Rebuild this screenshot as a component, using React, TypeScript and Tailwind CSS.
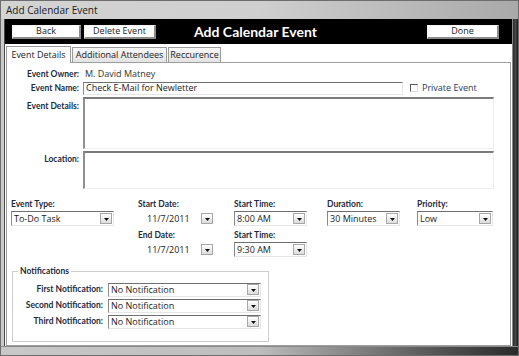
import React from 'react'

// ─── Small pieces ─────────────────────────────────────────────
const sunken =
  'border border-t-[#6f6f6f] border-l-[#8a8a8a] border-b-[#e6e6e6] border-r-[#e6e6e6] bg-white'

const label = "font-['Lato',sans-serif] font-bold text-[8.5px] text-[#1c2b40] whitespace-nowrap"

function Arrow() {
  return (
    <div className="w-[12px] h-[11px] shrink-0 flex items-end justify-center pb-[2px] border border-[#a7a7a7] bg-gradient-to-b from-white to-[#dcdcdc]">
      <svg width="5" height="3" viewBox="0 0 5 3">
        <path d="M0 0h5L2.5 3z" fill="#111" />
      </svg>
    </div>
  )
}

function Select({ value, w, h = 15 }: { value: string; w: string; h?: number }) {
  return (
    <div className={`${w} ${sunken} flex items-center pr-[1px]`} style={{ height: h }}>
      <span className="flex-1 pl-[2px] whitespace-nowrap leading-[12px]">{value}</span>
      <Arrow />
    </div>
  )
}

function DateSelect({ value }: { value: string }) {
  return (
    <div className="w-[75px] h-[15px] flex items-center">
      <span className="flex-1 pl-[9px] leading-[12px]">{value}</span>
      <Arrow />
    </div>
  )
}

function HeaderButton({ text, w }: { text: string; w: string }) {
  return (
    <div
      className={`${w} h-[14px] flex items-center justify-center bg-white text-[#222] text-[9px] border border-t-[#f4f4f4] border-l-[#f4f4f4] border-b-[#8c8c8c] border-r-[#8c8c8c] border-b-2 border-r-2`}
    >
      {text}
    </div>
  )
}

function Field({ title, children }: { title: string; children: React.ReactNode }) {
  return (
    <div className="flex flex-col">
      <span className={`h-[11px] leading-[10px] ${label}`}>{title}</span>
      <div className="mt-[1px]">{children}</div>
    </div>
  )
}

// ─── Main ─────────────────────────────────────────────────────
export default function App() {
  return (
    <div className="w-[519px] h-[356px] flex flex-col bg-[#c4c4c4] font-['Open_Sans',sans-serif] text-[9px] text-[#222] overflow-hidden border border-[#6d6d6d]">
      {/* Title bar */}
      <div className="h-[18px] shrink-0 flex items-center px-[5px] bg-gradient-to-r from-[#d3d3d3] via-[#cfcfcf] to-[#a9a9a9] text-[10px] text-[#1a1a1a]">
        Add Calendar Event
      </div>

      <div className="flex flex-1 min-h-0">
        {/* left frame */}
        <div className="w-[4px] shrink-0 bg-[#cacaca] border-r border-[#4a4a4a]" />

        <div className="w-[507px] shrink-0 flex flex-col bg-white">
          {/* Black header */}
          <div className="h-[25px] shrink-0 flex items-center bg-black pl-[7px]">
            <HeaderButton text="Back" w="w-[69px]" />
            <div className="ml-[3px]">
              <HeaderButton text="Delete Event" w="w-[72px]" />
            </div>
            <span className="ml-[38px] text-white font-['Lato',sans-serif] font-bold text-[14px] leading-none">
              Add Calendar Event
            </span>
            <div className="flex-1" />
            <div className="mr-[13px]">
              <HeaderButton text="Done" w="w-[72px]" />
            </div>
          </div>

          {/* Tabs */}
          <div className="h-[18px] shrink-0 flex items-end pl-[1px] text-[9px]">
            <div className="h-[17px] w-[65px] flex items-center justify-center border border-b-0 border-[#9a9a9a] bg-white relative top-[1px]">
              Event Details
            </div>
            <div className="h-[15px] w-[95px] ml-[1px] flex items-center justify-center border border-b-0 border-[#9a9a9a] bg-gradient-to-b from-[#f8f8f8] to-[#e3e3e3]">
              Additional Attendees
            </div>
            <div className="h-[15px] w-[53px] ml-[1px] flex items-center justify-center border border-b-0 border-[#9a9a9a] bg-gradient-to-b from-[#f8f8f8] to-[#e3e3e3]">
              Reccurence
            </div>
          </div>

          {/* Panel */}
          <div className="flex-1 mx-[1px] border border-[#9e9e9e] flex flex-col pt-[5px]">
            <div className="flex items-center h-[12px]">
              <span className={`w-[72px] text-right ${label}`}>Event Owner:</span>
              <span className="ml-[6px] text-[#333]">M. David Matney</span>
            </div>

            <div className="flex items-center h-[14px] mt-[1px]">
              <span className={`w-[72px] text-right ${label}`}>Event Name:</span>
              <div className={`ml-[4px] w-[320px] h-[13px] ${sunken} flex items-center pl-[2px]`}>
                Check E-Mail for Newletter
              </div>
              <div className="ml-[7px] w-[8px] h-[8px] border border-t-[#555] border-l-[#555] border-b-[#ddd] border-r-[#ddd] bg-white" />
              <span className="ml-[4px] text-[#1e3a5f]">Private Event</span>
            </div>

            <div className="flex mt-[2px]">
              <span className={`w-[72px] text-right pt-[3px] ${label}`}>Event Details:</span>
              <div className="ml-[4px] w-[411px] h-[52px] bg-white border-2 border-t-[#7b7b7b] border-l-[#8f8f8f] border-b-[#eeeeee] border-r-[#eeeeee] border-b border-r" />
            </div>

            <div className="flex mt-[2px]">
              <span className={`w-[72px] text-right pt-[2px] ${label}`}>Location:</span>
              <div className="ml-[4px] w-[411px] h-[38px] bg-white border-2 border-t-[#7b7b7b] border-l-[#8f8f8f] border-b-[#eeeeee] border-r-[#eeeeee] border-b border-r" />
            </div>

            {/* Lower fields */}
            <div className="flex mt-[10px] pl-[4px]">
              <div className="w-[103px]">
                <Field title="Event Type:">
                  <Select value="To-Do Task" w="w-[103px]" />
                </Field>
              </div>
              <div className="ml-[24px] w-[75px] flex flex-col">
                <Field title="Start Date:">
                  <DateSelect value="11/7/2011" />
                </Field>
                <div className="mt-[4px]">
                  <Field title="End Date:">
                    <DateSelect value="11/7/2011" />
                  </Field>
                </div>
              </div>
              <div className="ml-[21px] w-[73px] flex flex-col">
                <Field title="Start Time:">
                  <Select value="8:00 AM" w="w-[73px]" />
                </Field>
                <div className="mt-[4px]">
                  <Field title="Start Time:">
                    <Select value="9:30 AM" w="w-[73px]" />
                  </Field>
                </div>
              </div>
              <div className="ml-[20px] w-[73px]">
                <Field title="Duration:">
                  <Select value="30 Minutes" w="w-[73px]" />
                </Field>
              </div>
              <div className="ml-[17px] w-[76px]">
                <Field title="Priority:">
                  <Select value="Low" w="w-[76px]" />
                </Field>
              </div>
            </div>

            {/* Notifications */}
            <fieldset className="mt-[10px] ml-[5px] w-[257px] border border-[#cdcdcd] pb-[12px] pt-[7px]">
              <legend className={`ml-[5px] px-[2px] leading-none ${label}`}>Notifications</legend>
              {[
                ['First Notification:', 'No Notification'],
                ['Second Notification:', 'No Notification'],
                ['Third Notification:', 'No Notification'],
              ].map(([title, value], i) => (
                <div key={title} className={`flex items-center ${i > 0 ? 'mt-[2px]' : ''}`}>
                  <span className={`w-[90px] text-right ${label}`}>{title}</span>
                  <div className="ml-[5px]">
                    <Select value={value} w="w-[153px]" h={14} />
                  </div>
                </div>
              ))}
            </fieldset>
          </div>
        </div>

        {/* right frame */}
        <div className="flex-1 bg-gradient-to-r from-[#2a2a2a] via-[#4a4a4a] to-[#1a1a1a] border-l border-[#888]" />
      </div>

      {/* bottom frame */}
      <div className="h-[9px] shrink-0 bg-gradient-to-r from-[#c8c8c8] via-[#bdbdbd] to-[#2b2b2b] border-t border-[#8a8a8a]" />
    </div>
  )
}
